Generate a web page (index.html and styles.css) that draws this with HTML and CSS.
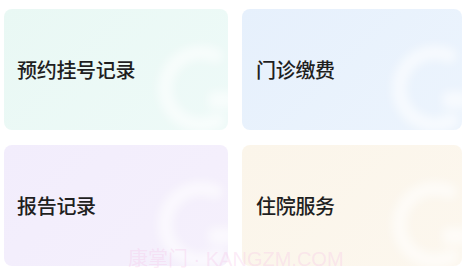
FILE: index.html
```html
<!DOCTYPE html>
<html lang="zh">
<head>
<meta charset="utf-8">
<link rel="stylesheet" href="styles.css">
</head>
<body>
<div class="grid">
  <div class="card mint"><span class="label">预约挂号记录</span><svg class="ghost" viewBox="0 0 80 90"><path d="M58 18 A30 30 0 1 0 60 72" fill="none" stroke="#fff" stroke-width="12" stroke-linecap="round"/><rect x="52" y="48" width="22" height="14" rx="4" fill="#fff"/></svg></div>
  <div class="card blue"><span class="label">门诊缴费</span><svg class="ghost" viewBox="0 0 80 90"><path d="M58 18 A30 30 0 1 0 60 72" fill="none" stroke="#fff" stroke-width="12" stroke-linecap="round"/><rect x="52" y="48" width="22" height="14" rx="4" fill="#fff"/></svg></div>
  <div class="card lilac"><span class="label">报告记录</span><svg class="ghost" viewBox="0 0 80 90"><path d="M58 18 A30 30 0 1 0 60 72" fill="none" stroke="#fff" stroke-width="12" stroke-linecap="round"/><rect x="52" y="48" width="22" height="14" rx="4" fill="#fff"/></svg></div>
  <div class="card cream"><span class="label">住院服务</span><svg class="ghost" viewBox="0 0 80 90"><path d="M58 18 A30 30 0 1 0 60 72" fill="none" stroke="#fff" stroke-width="12" stroke-linecap="round"/><rect x="52" y="48" width="22" height="14" rx="4" fill="#fff"/></svg></div>
</div>
<div class="watermark">康掌门 · KANGZM.COM</div>
</body>
</html>
```
FILE: styles.css
```css
html, body {
  margin: 0;
  padding: 0;
  background: #ffffff;
  width: 466px;
  height: 279px;
  overflow: hidden;
  font-family: "Noto Sans CJK SC", "Noto Sans", sans-serif;
}
.grid {
  display: grid;
  grid-template-columns: 224px 220px;
  grid-template-rows: 121px 121px;
  column-gap: 14px;
  row-gap: 15px;
  padding: 9px 4px 0 4px;
}
.card {
  position: relative;
  overflow: hidden;
  border-radius: 8px;
  display: flex;
  align-items: center;
  padding-left: 13px;
}
.card.blue, .card.cream { padding-left: 14px; }
.mint { background: linear-gradient(135deg, #e9f8f4 0%, #eefaf8 100%); }
.blue { background: linear-gradient(135deg, #e6f0fc 0%, #ecf4fd 100%); }
.lilac { background: linear-gradient(135deg, #f2edfc 0%, #f5f0fc 100%); }
.cream { background: linear-gradient(135deg, #fbf5ea 0%, #fcf7ee 100%); }
.label {
  font-size: 20px;
  line-height: 24px;
  font-weight: 500;
  color: #1f1f1f;
  letter-spacing: -0.3px;
  margin-top: 1px;
  position: relative;
  z-index: 1;
}
.ghost {
  position: absolute;
  right: -14px;
  bottom: -12px;
  width: 96px;
  height: 108px;
  opacity: 0.6;
  filter: blur(5px);
}
.watermark {
  position: absolute;
  left: 128px;
  top: 243px;
  font-family: "Liberation Sans", "Noto Sans CJK SC", sans-serif;
  font-size: 20px;
  color: rgba(245, 190, 230, 0.3);
  white-space: nowrap;
}
```
